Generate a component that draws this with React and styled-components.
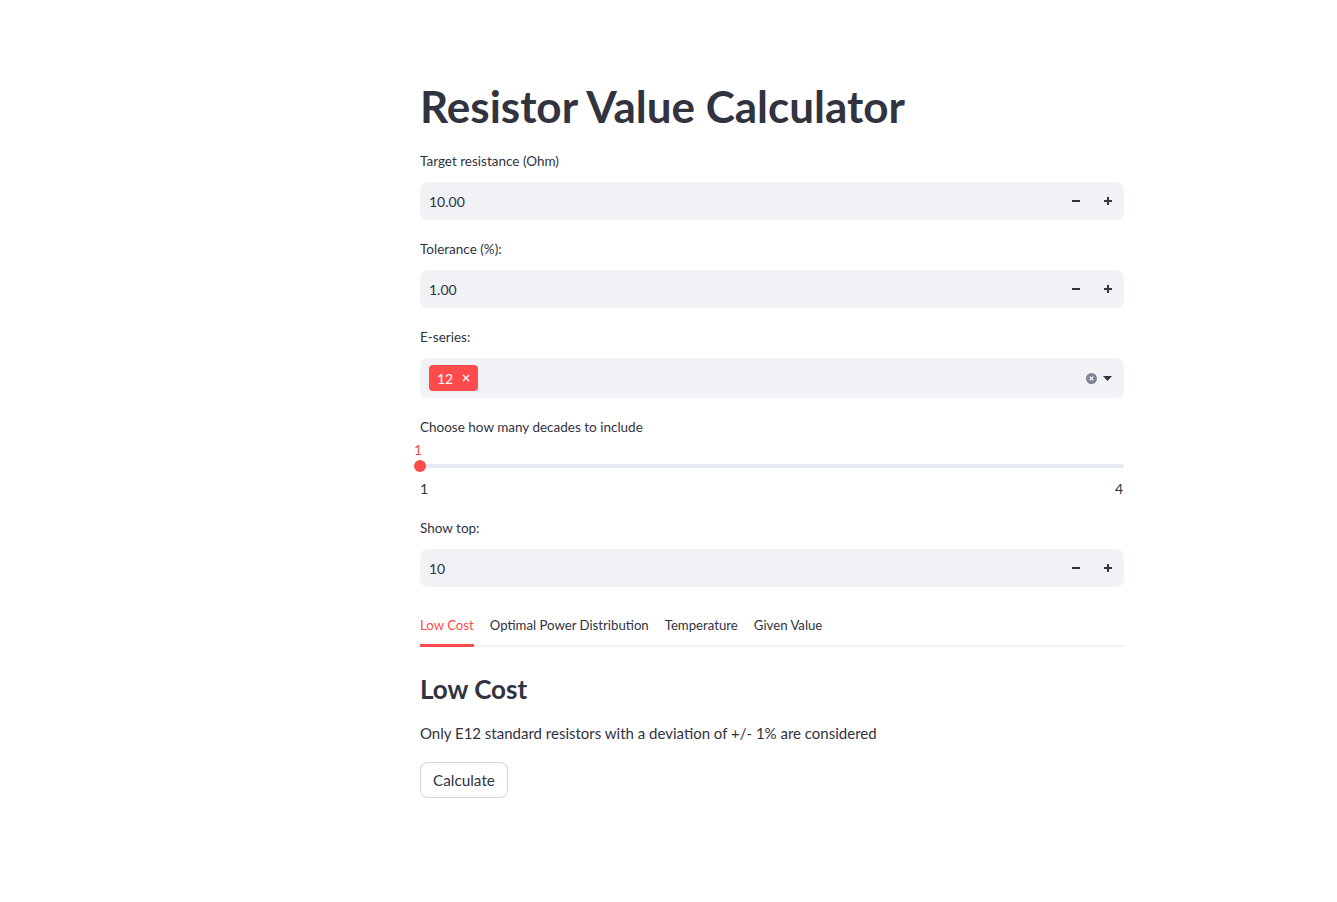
import React from 'react';
import styled, { createGlobalStyle } from 'styled-components';

const RED = 'rgb(255, 75, 75)';
const TEXT = 'rgb(49, 51, 63)';

const Global = createGlobalStyle`
  html, body { margin: 0; padding: 0; background: #ffffff; }
  body { font-family: Lato, "Noto Sans", sans-serif; color: ${TEXT}; }
  * { box-sizing: border-box; }
`;

const Page = styled.div`
  min-height: 902px;
  padding: 78px 0 0 420px;
`;

const Main = styled.main`
  width: 704px;
  display: flex;
  flex-direction: column;
`;

const Title = styled.h1`
  margin: 0 0 15px;
  font-size: 44px;
  font-weight: 700;
  line-height: 56px;
  color: ${TEXT};
`;

const Field = styled.div`
  display: flex;
  flex-direction: column;
  margin-top: ${(p) => (p.$first ? 0 : 17)}px;
`;

const Label = styled.label`
  font-size: 13.5px;
  line-height: 24px;
  margin-bottom: 9px;
  color: ${TEXT};
`;

const InputBox = styled.div`
  height: ${(p) => p.$h || 38}px;
  background: rgb(240, 242, 246);
  border-radius: 8px;
  display: flex;
  align-items: center;
  padding-left: 9px;
`;

const Value = styled.span`
  flex: 1;
  font-size: 14px;
  color: ${TEXT};
`;

const StepButton = styled.button`
  width: 32px;
  height: 38px;
  border: none;
  background: transparent;
  padding: 0;
  display: flex;
  align-items: center;
  justify-content: center;
  cursor: pointer;
`;

const Tag = styled.span`
  display: inline-flex;
  align-items: center;
  height: 26px;
  padding: 0 8px;
  gap: 9px;
  background: ${RED};
  border-radius: 4px;
  color: #fff;
  font-size: 14px;
`;

const TagArea = styled.div`
  flex: 1;
  display: flex;
  align-items: center;
`;

const SelectIcons = styled.div`
  display: flex;
  align-items: center;
  gap: 6px;
  padding-right: 12px;
`;

const SliderWrap = styled.div`
  display: flex;
  flex-direction: column;
  margin-top: -6px;
  padding-bottom: 2px;
`;

const ThumbValue = styled.div`
  font-size: 14px;
  line-height: 16px;
  color: ${RED};
  width: 12px;
  text-align: center;
  margin-left: -8px;
`;

const Track = styled.div`
  position: relative;
  height: 4px;
  margin-top: 6px;
  background: rgb(230, 234, 241);
  border-radius: 4px;
`;

const Thumb = styled.div`
  position: absolute;
  left: -6px;
  top: -4px;
  width: 12px;
  height: 12px;
  border-radius: 50%;
  background: ${RED};
`;

const Ticks = styled.div`
  display: flex;
  justify-content: space-between;
  font-size: 14px;
  line-height: 16px;
  margin-top: 13px;
  padding: 0 1px 0 0;
  color: ${TEXT};
`;

const TabList = styled.div`
  display: flex;
  gap: 16px;
  margin-top: 17px;
  border-bottom: 2px solid rgb(240, 242, 246);
  height: 43px;
`;

const Tab = styled.button`
  position: relative;
  border: none;
  background: transparent;
  padding: 0;
  height: 41px;
  font-family: inherit;
  font-size: 13.2px;
  color: ${(p) => (p.$active ? RED : TEXT)};
  cursor: pointer;
  &::after {
    content: '';
    display: ${(p) => (p.$active ? 'block' : 'none')};
    position: absolute;
    left: 0;
    right: 0;
    bottom: -2px;
    height: 3px;
    background: ${RED};
  }
`;

const Panel = styled.section`
  padding-top: 16px;
  display: flex;
  flex-direction: column;
  align-items: flex-start;
`;

const Heading = styled.h3`
  margin: 9px 0 0;
  font-size: 26px;
  font-weight: 700;
  line-height: 34px;
  color: ${TEXT};
`;

const Paragraph = styled.p`
  margin: 14px 0 0;
  font-size: 15px;
  line-height: 26px;
  color: ${TEXT};
`;

const Button = styled.button`
  margin-top: 16px;
  height: 36px;
  padding: 0 12px;
  background: #fff;
  border: 1px solid rgba(49, 51, 63, 0.2);
  border-radius: 8px;
  font-family: inherit;
  font-size: 15.3px;
  color: ${TEXT};
  cursor: pointer;
`;

const Minus = () => (
  <svg width="10" height="10" viewBox="0 0 10 10">
    <path d="M1 5h8" stroke={TEXT} strokeWidth="2" />
  </svg>
);
const Plus = () => (
  <svg width="10" height="10" viewBox="0 0 10 10">
    <path d="M1 5h8M5 1v8" stroke={TEXT} strokeWidth="2" />
  </svg>
);

const NumberInput = ({ label, value, first }) => (
  <Field $first={first}>
    <Label>{label}</Label>
    <InputBox>
      <Value>{value}</Value>
      <StepButton aria-label="decrement"><Minus /></StepButton>
      <StepButton aria-label="increment"><Plus /></StepButton>
    </InputBox>
  </Field>
);

export default function App() {
  return (
    <>
      <Global />
      <Page>
        <Main>
          <Title>Resistor Value Calculator</Title>
          <NumberInput first label="Target resistance (Ohm)" value="10.00" />
          <NumberInput label="Tolerance (%):" value="1.00" />
          <Field>
            <Label>E-series:</Label>
            <InputBox $h={40}>
              <TagArea>
                <Tag>
                  12
                  <svg width="8" height="8" viewBox="0 0 8 8">
                    <path d="M1 1l6 6M7 1L1 7" stroke="#fff" strokeWidth="1.4" />
                  </svg>
                </Tag>
              </TagArea>
              <SelectIcons>
                <svg width="11" height="11" viewBox="0 0 11 11">
                  <circle cx="5.5" cy="5.5" r="5.5" fill="rgb(128,132,149)" />
                  <path d="M3.7 3.7l3.6 3.6M7.3 3.7L3.7 7.3" stroke="#fff" strokeWidth="1.2" />
                </svg>
                <svg width="9" height="5" viewBox="0 0 9 5">
                  <path d="M0 0h9L4.5 5z" fill={TEXT} />
                </svg>
              </SelectIcons>
            </InputBox>
          </Field>
          <Field>
            <Label>Choose how many decades to include</Label>
            <SliderWrap>
              <ThumbValue>1</ThumbValue>
              <Track>
                <Thumb />
              </Track>
              <Ticks>
                <span>1</span>
                <span>4</span>
              </Ticks>
            </SliderWrap>
          </Field>
          <NumberInput label="Show top:" value="10" />
          <TabList>
            <Tab $active>Low Cost</Tab>
            <Tab>Optimal Power Distribution</Tab>
            <Tab>Temperature</Tab>
            <Tab>Given Value</Tab>
          </TabList>
          <Panel>
            <Heading>Low Cost</Heading>
            <Paragraph>Only E12 standard resistors with a deviation of +/- 1% are considered</Paragraph>
            <Button>Calculate</Button>
          </Panel>
        </Main>
      </Page>
    </>
  );
}
